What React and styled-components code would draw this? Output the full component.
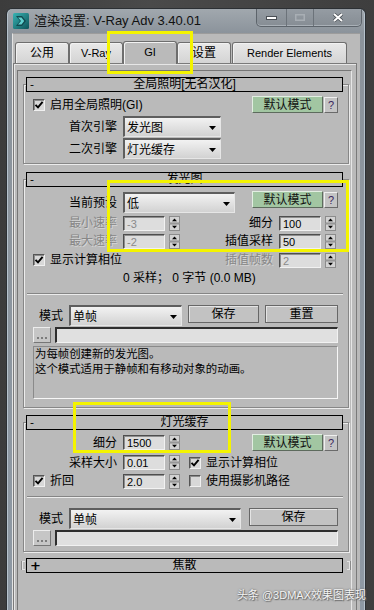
import React from "react";
import styled, { createGlobalStyle } from "styled-components";

const GlobalStyle = createGlobalStyle`
  html, body {
    margin: 0;
    padding: 0;
    background: #454545;
  }
  body {
    font-family: "Liberation Sans", "Noto Sans CJK SC", sans-serif;
    font-size: 12px;
    color: #000;
  }
`;

const PANEL = "#bababa";

const Screen = styled.div`
  position: relative;
  width: 374px;
  height: 610px;
  overflow: hidden;
  box-sizing: border-box;
  padding: 8px 8px 0 6px;
  background: linear-gradient(90deg, #3c3c3c, #4a4a4a 40%, #3e3e3e);
  display: flex;
`;

const Window = styled.div`
  flex: 1;
  display: flex;
  flex-direction: column;
  border: 1px solid #2c3034;
  border-bottom: none;
  border-radius: 6px 6px 0 0;
  background: linear-gradient(180deg, #a1a8ae 0, #8b939b 24px, #8e99a4 100%);
  box-shadow: inset 1px 0 0 #b6c2cc, inset -1px 0 0 #b6c2cc;
`;

const TitleBar = styled.div`
  height: 24px;
  flex: none;
  display: flex;
  align-items: center;
  padding-left: 6px;
`;

const Title = styled.div`
  margin-left: 5px;
  font-family: "Liberation Sans", "Noto Sans CJK SC", sans-serif;
  font-size: 13px;
  line-height: 16px;
  color: #111;
  white-space: nowrap;
`;

const Caption = styled.div`
  margin-left: auto;
  margin-right: 3px;
  align-self: flex-start;
  display: flex;
  height: 17px;
  border: 1px solid #5d646b;
  border-top: none;
  border-radius: 0 0 5px 5px;
  overflow: hidden;
  background: linear-gradient(180deg, #959ca3, #868d94);
  box-shadow: inset 0 -1px 0 #a9b0b7;
`;

const CapBtn = styled.div`
  width: ${(p) => p.$w}px;
  height: 100%;
  display: flex;
  align-items: center;
  justify-content: center;
  border-left: ${(p) => (p.$first ? "none" : "1px solid #6c737a")};
  box-sizing: border-box;
`;

const Client = styled.div`
  flex: 1;
  margin: 0 5px;
  display: flex;
  flex-direction: column;
  background: ${PANEL};
  border-top: 1px solid #9c9c9c;
  border-left: 1px solid #e2e2e2;
`;

const TabStrip = styled.div`
  display: flex;
  align-items: flex-end;
  margin-top: 7px;
  padding-left: 2px;
  height: 22px;
`;

const Tab = styled.div`
  box-sizing: border-box;
  width: ${(p) => p.$w}px;
  height: ${(p) => (p.$active ? 23 : 21)}px;
  margin-bottom: ${(p) => (p.$active ? -1 : 0)}px;
  margin-left: ${(p) => p.$ml || 0}px;
  position: relative;
  z-index: ${(p) => (p.$active ? 1 : 0)};
  display: flex;
  align-items: center;
  justify-content: center;
  padding-bottom: ${(p) => (p.$active ? 2 : 0)}px;
  border: 1px solid #6e6e6e;
  border-bottom: none;
  border-radius: 3px 3px 0 0;
  background: ${(p) =>
    p.$active ? PANEL : "linear-gradient(180deg, #e8e8e8, #d4d4d4)"};
  box-shadow: inset 1px 1px 0 #f2f2f2;
  font-size: ${(p) => (p.$latin ? 11 : 12)}px;
  line-height: 14px;
  white-space: nowrap;
`;

const TabPanel = styled.div`
  flex: 1;
  display: flex;
  flex-direction: column;
  margin-right: 3px;
  padding: 6px 0 0 3px;
  border: 1px solid #7a7a7a;
  border-bottom: none;
  box-shadow: inset 1px 1px 0 #e6e6e6;
`;

const Page = styled.div`
  flex: 1;
  margin-right: 4px;
  padding: 6px 0 0 5px;
  border-top: 1px solid #767676;
  border-left: 1px solid #767676;
  border-right: 1px solid #e6e6e6;
`;

const RolloutWrap = styled.div`
  width: 326px;
  margin-top: ${(p) => p.$mt || 0}px;
`;

const Header = styled.div`
  position: relative;
  z-index: 1;
  box-sizing: border-box;
  height: 15px;
  margin: 0 6px 0 3px;
  display: flex;
  align-items: center;
  border: 1px solid #000;
  background: ${PANEL};
  font-size: 12px;
  line-height: 13px;
`;

const Sign = styled.span`
  width: 12px;
  padding-left: 3px;
  box-sizing: border-box;
  font-family: "DejaVu Sans", sans-serif;
  font-size: ${(p) => (p.$plus ? 13 : 11)}px;
  font-weight: ${(p) => (p.$plus ? 700 : 400)};
  line-height: 12px;
`;

const HeaderTitle = styled.span`
  flex: 1;
  text-align: center;
  white-space: nowrap;
`;

const Body = styled.div`
  box-sizing: border-box;
  margin-top: -8px;
  padding: ${(p) => p.$pt}px 10px ${(p) => p.$pb}px 9px;
  border: 1px solid #878787;
  box-shadow: inset 1px 1px 0 #ececec, 1px 1px 0 #ececec;
`;

const CollapsedRow = styled.div`
  display: flex;
  align-items: center;
  margin-top: ${(p) => p.$mt}px;
  margin-left: -1px;
  width: 328px;
`;

const Bracket = styled.span`
  width: 3px;
  height: 9px;
  box-sizing: border-box;
  border: 1px solid #e4e4e4;
  border-${(p) => (p.$right ? "left" : "right")}: none;
  box-shadow: ${(p) => (p.$right ? "1px 0 0 #8a8a8a" : "-1px 0 0 #8a8a8a")};
`;

const CollapsedHeader = styled(Header)`
  flex: 1;
  margin: 0 4px 0 1px;
`;

const Row = styled.div`
  display: flex;
  align-items: center;
  height: ${(p) => p.$h}px;
  margin-top: ${(p) => p.$mt || 0}px;
`;

const Cell = styled.div`
  display: flex;
  align-items: center;
  width: ${(p) => p.$w}px;
  flex: none;
`;

const Push = styled.div`
  flex: 1;
`;

const Label = styled.span`
  flex: none;
  box-sizing: border-box;
  width: ${(p) => (p.$w ? `${p.$w}px` : "auto")};
  margin-left: ${(p) => p.$ml || 0}px;
  text-align: ${(p) => (p.$right ? "right" : "left")};
  white-space: nowrap;
  font-size: 12px;
  line-height: 14px;
  color: ${(p) => (p.$disabled ? "#878787" : "#000")};
  text-shadow: ${(p) => (p.$disabled ? "1px 1px 0 #d6d6d6" : "none")};
`;

const Note = styled.div`
  margin-left: 90px;
  font-size: 12px;
  line-height: 14px;
  white-space: nowrap;
`;

const SelectBox = styled.div`
  flex: none;
  box-sizing: border-box;
  width: ${(p) => p.$w}px;
  height: 21px;
  margin-left: ${(p) => p.$ml || 0}px;
  display: flex;
  align-items: center;
  justify-content: space-between;
  padding: 1px 4px 0 2px;
  border-style: solid;
  border-width: 2px 1px 1px 2px;
  border-color: #5e5e5e #e6e6e6 #e6e6e6 #5e5e5e;
  background: linear-gradient(180deg, #f2f2f2, #d2d2d2);
  font-size: 12px;
  line-height: 14px;
`;

const FieldBox = styled.div`
  box-sizing: border-box;
  width: 42px;
  height: 15px;
  padding: 1px 0 0 3px;
  border-style: solid;
  border-width: 1px;
  border-color: #4e4e4e #f2f2f2 #f2f2f2 #4e4e4e;
  box-shadow: inset 1px 1px 0 #8e8e8e;
  background: #dddddd;
  font-family: "Liberation Sans", sans-serif;
  font-size: 11px;
  line-height: 12px;
  color: ${(p) => (p.$disabled ? "#8a8a8a" : "#000")};
`;

const SpinWrap = styled.div`
  flex: none;
  display: flex;
  align-items: center;
  gap: 4px;
  margin-left: ${(p) => p.$ml || 0}px;
  margin-right: ${(p) => p.$mr || 0}px;
`;

const GreenBtn = styled.div`
  flex: none;
  box-sizing: border-box;
  width: 71px;
  height: 17px;
  align-self: ${(p) => (p.$top ? "flex-start" : "center")};
  margin-top: ${(p) => (p.$top ? -1 : 0)}px;
  display: flex;
  align-items: center;
  justify-content: center;
  border: 1px solid;
  border-color: #e2eee2 #5d6b5d #5d6b5d #e2eee2;
  background: #a2c6a2;
  font-size: 12px;
  line-height: 14px;
  color: #111;
`;

const HelpBtn = styled.div`
  flex: none;
  box-sizing: border-box;
  width: 14px;
  height: 16px;
  margin-left: 1px;
  align-self: ${(p) => (p.$top ? "flex-start" : "center")};
  display: flex;
  align-items: center;
  justify-content: center;
  border: 1px solid;
  border-color: #efefef #6a6a6a #6a6a6a #efefef;
  background: #c4c4c4;
  font-family: "Liberation Sans", sans-serif;
  font-size: 11px;
  color: #3a1f5c;
`;

const Btn = styled.div`
  flex: none;
  box-sizing: border-box;
  width: ${(p) => p.$w}px;
  height: 18px;
  margin-left: ${(p) => p.$ml || 0}px;
  align-self: flex-start;
  display: flex;
  align-items: center;
  justify-content: center;
  border: 1px solid #676767;
  box-shadow: inset 1px 1px 0 #e4e4e4;
  background: #c2c2c2;
  font-size: 12px;
  line-height: 14px;
`;

const DotsBtn = styled.div`
  flex: none;
  box-sizing: border-box;
  width: 18px;
  height: 16px;
  display: flex;
  align-items: center;
  justify-content: center;
  border: 1px solid;
  border-color: #ededed #767676 #767676 #ededed;
  background: #c6c6c6;
`;

const PathField = styled.div`
  flex: none;
  box-sizing: border-box;
  width: 283px;
  height: 16px;
  margin-left: 4px;
  border-style: solid;
  border-width: 2px 1px 1px 2px;
  border-color: #2e2e2e #f2f2f2 #f2f2f2 #2e2e2e;
  background: #e0e0e0;
`;

const Separator = styled.div`
  height: 2px;
  margin: ${(p) => p.$mt}px -5px 0 -6px;
  border-top: 1px solid #858585;
  border-bottom: 1px solid #ececec;
  box-sizing: border-box;
`;

const TextPane = styled.div`
  box-sizing: border-box;
  height: 53px;
  margin-top: 3px;
  padding: 0 1px;
  border-style: solid;
  border-width: 1px;
  border-color: #8a8a8a #f7f7f7 #f7f7f7 #8a8a8a;
  font-size: 11.4px;
  line-height: 15px;
  white-space: pre;
`;

const CheckFrame = styled.span`
  flex: none;
  box-sizing: border-box;
  width: 12px;
  height: 12px;
  margin-left: ${(p) => p.$ml || 0}px;
  display: flex;
  align-items: center;
  justify-content: center;
  border-style: solid;
  border-width: 1px;
  border-color: #555 #f0f0f0 #f0f0f0 #555;
  box-shadow: inset 1px 1px 0 #8c8c8c;
  background: #d8d8d8;
`;

const Highlight = styled.div`
  position: absolute;
  left: ${(p) => p.$x}px;
  top: ${(p) => p.$y}px;
  width: ${(p) => p.$w}px;
  height: ${(p) => p.$h}px;
  box-sizing: border-box;
  border: 3px solid #f4f400;
  pointer-events: none;
  z-index: 5;
`;

const Watermark = styled.div`
  position: absolute;
  right: 8px;
  bottom: 8px;
  font-family: "Liberation Sans", "Noto Sans CJK SC", sans-serif;
  font-size: 11px;
  line-height: 13px;
  color: #f4f4f4;
  text-shadow: 0 0 2px #5a5a5a, 1px 1px 1px #6a6a6a;
  white-space: nowrap;
  z-index: 6;
`;

const AppIcon = () => (
  <svg width="16" height="16" viewBox="0 0 16 16">
    <defs>
      <linearGradient id="ig" x1="0" y1="0" x2="1" y2="1">
        <stop offset="0" stopColor="#38b3b3" />
        <stop offset="1" stopColor="#0d5258" />
      </linearGradient>
    </defs>
    <rect x="0" y="0" width="16" height="16" rx="1.5" fill="url(#ig)" />
    <path d="M3 3 L9 3 L13 8 L9 13 L3 13 L7 8 Z" fill="#12494f" />
    <path d="M5 4.5 L8.5 4.5 L11.2 8 L8.5 11.5 L5 11.5 L8 8 Z" fill="#5fd0cf" />
  </svg>
);

const Dots = () => (
  <svg width="12" height="12" viewBox="0 0 12 12">
    <rect x="1" y="8" width="2" height="2" fill="#7c7c7c" />
    <rect x="5" y="8" width="2" height="2" fill="#7c7c7c" />
    <rect x="9" y="8" width="2" height="2" fill="#7c7c7c" />
  </svg>
);

const Check = ({ checked, $ml }) => (
  <CheckFrame $ml={$ml}>
    {checked && (
      <svg width="10" height="10" viewBox="0 0 10 10">
        <path d="M1.5 4.8 L4 7.4 L8.6 1.8" fill="none" stroke="#000" strokeWidth="1.9" />
      </svg>
    )}
  </CheckFrame>
);

const Select = ({ $w, $ml, children }) => (
  <SelectBox $w={$w} $ml={$ml}>
    <span>{children}</span>
    <svg width="7" height="4" viewBox="0 0 7 4">
      <path d="M0 0 H7 L3.5 4 Z" fill="#000" />
    </svg>
  </SelectBox>
);

const Spinner = ({ value, disabled, $ml, $mr }) => (
  <SpinWrap $ml={$ml} $mr={$mr}>
    <FieldBox $disabled={disabled}>{value}</FieldBox>
    <svg width="11" height="15" viewBox="0 0 11 15">
      <rect x="0.5" y="0.5" width="10" height="6.5" fill="#d2d2d2" stroke="#8c8c8c" />
      <rect x="0.5" y="8" width="10" height="6.5" fill="#d2d2d2" stroke="#8c8c8c" />
      <path d="M3 5.2 L5.5 2.4 L8 5.2 Z" fill="#000" />
      <path d="M3 9.8 L5.5 12.6 L8 9.8 Z" fill="#000" />
    </svg>
  </SpinWrap>
);

const Rollout = ({ title, $mt, $pt, $pb, children }) => (
  <RolloutWrap $mt={$mt}>
    <Header>
      <Sign>-</Sign>
      <HeaderTitle>{title}</HeaderTitle>
      <Sign />
    </Header>
    <Body $pt={$pt} $pb={$pb}>
      {children}
    </Body>
  </RolloutWrap>
);

export default function App() {
  return (
    <>
      <GlobalStyle />
      <Screen>
        <Window>
          <TitleBar>
            <AppIcon />
            <Title>渲染设置: V-Ray Adv 3.40.01</Title>
            <Caption>
              <CapBtn $w={29} $first>
                <svg width="11" height="4" viewBox="0 0 11 4">
                  <rect x="0.5" y="0.5" width="10" height="3" fill="#fff" stroke="#4a4f55" />
                </svg>
              </CapBtn>
              <CapBtn $w={27}>
                <svg width="10" height="7" viewBox="0 0 10 7">
                  <rect x="0.75" y="0.75" width="8.5" height="5.5" fill="none" stroke="#a8aeb4" strokeWidth="1.5" />
                </svg>
              </CapBtn>
              <CapBtn $w={48}>
                <svg width="10" height="9" viewBox="0 0 10 9">
                  <path d="M1 1 L9 8 M9 1 L1 8" stroke="#4a4f55" strokeWidth="3.4" />
                  <path d="M1 1 L9 8 M9 1 L1 8" stroke="#fff" strokeWidth="2" />
                </svg>
              </CapBtn>
            </Caption>
          </TitleBar>
          <Client>
            <TabStrip>
              <Tab $w={54}>公用</Tab>
              <Tab $w={54} $latin>V-Ray</Tab>
              <Tab $w={54} $latin $active>GI</Tab>
              <Tab $w={54}>设置</Tab>
              <Tab $w={115} $latin $ml={1}>Render Elements</Tab>
            </TabStrip>
            <TabPanel>
              <Page>
                <Rollout title="全局照明[无名汉化]" $mt={0} $pt={11} $pb={4}>
                  <Row $h={17}>
                    <Check checked />
                    <Label $ml={5}>启用全局照明(GI)</Label>
                    <Push />
                    <GreenBtn>默认模式</GreenBtn>
                    <HelpBtn>?</HelpBtn>
                  </Row>
                  <Row $h={21} $mt={3}>
                    <Label $w={84} $right>首次引擎</Label>
                    <Select $w={98} $ml={6}>发光图</Select>
                  </Row>
                  <Row $h={21} $mt={1}>
                    <Label $w={84} $right>二次引擎</Label>
                    <Select $w={98} $ml={6}>灯光缓存</Select>
                  </Row>
                </Rollout>

                <Rollout title="发光图" $mt={8} $pt={12} $pb={8}>
                  <Row $h={21}>
                    <Label $w={84} $right>当前预设</Label>
                    <Select $w={112} $ml={6}>低</Select>
                    <Push />
                    <GreenBtn $top>默认模式</GreenBtn>
                    <HelpBtn $top>?</HelpBtn>
                  </Row>
                  <Row $h={16} $mt={2}>
                    <Label $w={84} $right $disabled>最小速率</Label>
                    <Spinner $ml={6} value="-3" disabled />
                    <Push />
                    <Label>细分</Label>
                    <Spinner $ml={6} $mr={2} value="100" />
                  </Row>
                  <Row $h={16} $mt={2}>
                    <Label $w={84} $right $disabled>最大速率</Label>
                    <Spinner $ml={6} value="-2" disabled />
                    <Push />
                    <Label>插值采样</Label>
                    <Spinner $ml={6} $mr={2} value="50" />
                  </Row>
                  <Row $h={16} $mt={3}>
                    <Check checked />
                    <Label $ml={5}>显示计算相位</Label>
                    <Push />
                    <Label $disabled>插值帧数</Label>
                    <Spinner $ml={6} $mr={2} value="2" disabled />
                  </Row>
                  <Row $h={14} $mt={3}>
                    <Note>0 采样； 0 字节 (0.0 MB)</Note>
                  </Row>
                  <Separator $mt={8} />
                  <Row $h={21} $mt={10}>
                    <Label $ml={6} $w={24}>模式</Label>
                    <Select $w={113} $ml={6}>单帧</Select>
                    <Btn $w={71} $ml={6}>保存</Btn>
                    <Btn $w={73} $ml={6}>重置</Btn>
                  </Row>
                  <Row $h={16} $mt={1}>
                    <DotsBtn><Dots /></DotsBtn>
                    <PathField />
                  </Row>
                  <TextPane>
                    {"为每帧创建新的发光图。\n这个模式适用于静帧和有移动对象的动画。"}
                  </TextPane>
                </Rollout>

                <Rollout title="灯光缓存" $mt={7} $pt={11} $pb={5}>
                  <Row $h={17}>
                    <Label $w={84} $right>细分</Label>
                    <Spinner $ml={6} value="1500" />
                    <Push />
                    <GreenBtn>默认模式</GreenBtn>
                    <HelpBtn>?</HelpBtn>
                  </Row>
                  <Row $h={15} $mt={4}>
                    <Label $w={84} $right>采样大小</Label>
                    <Spinner $ml={6} value="0.01" />
                    <Check $ml={9} checked />
                    <Label $ml={5}>显示计算相位</Label>
                  </Row>
                  <Row $h={16} $mt={3}>
                    <Cell $w={90}>
                      <Check checked />
                      <Label $ml={5}>折回</Label>
                    </Cell>
                    <Spinner value="2.0" />
                    <Check $ml={9} />
                    <Label $ml={5}>使用摄影机路径</Label>
                  </Row>
                  <Separator $mt={7} />
                  <Row $h={21} $mt={10}>
                    <Label $ml={6} $w={24}>模式</Label>
                    <Select $w={172} $ml={6}>单帧</Select>
                    <Btn $w={89} $ml={8}>保存</Btn>
                  </Row>
                  <Row $h={16} $mt={1}>
                    <DotsBtn><Dots /></DotsBtn>
                    <PathField />
                  </Row>
                </Rollout>

                <CollapsedRow $mt={6}>
                  <Bracket />
                  <CollapsedHeader>
                    <Sign $plus>+</Sign>
                    <HeaderTitle>焦散</HeaderTitle>
                    <Sign />
                  </CollapsedHeader>
                  <Bracket $right />
                </CollapsedRow>
              </Page>
            </TabPanel>
          </Client>
        </Window>

        <Highlight $x={107} $y={31} $w={86} $h={43} />
        <Highlight $x={107} $y={180} $w={242} $h={72} />
        <Highlight $x={73} $y={402} $w={158} $h={51} />
        <Watermark>头条 @3DMAX效果图表现</Watermark>
      </Screen>
    </>
  );
}
